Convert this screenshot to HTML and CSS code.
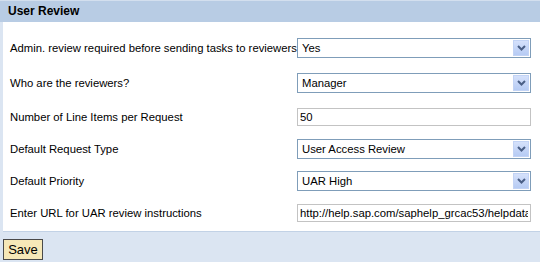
FILE: index.html
```html
<!DOCTYPE html>
<html lang="en">
<head>
  <meta charset="UTF-8" />
  <title>User Review</title>
  <link rel="stylesheet" href="styles.css">
</head>
<body>

  <div class="tray">
    <div class="tray-title">User Review</div>

    <!-- Settings -->
    <div class="tray-body">
      <div class="row first">
        <label>Admin. review required before sending tasks to reviewers</label>
        <div class="dropdown"><span>Yes</span><span class="dd-btn"><svg width="9" height="6" viewBox="0 0 9 6"><path d="M1 1 L4.5 4.5 L8 1" fill="none" stroke="#4a5f86" stroke-width="2"/></svg></span></div>
      </div>
      <div class="row second">
        <label>Who are the reviewers?</label>
        <div class="dropdown"><span>Manager</span><span class="dd-btn"><svg width="9" height="6" viewBox="0 0 9 6"><path d="M1 1 L4.5 4.5 L8 1" fill="none" stroke="#4a5f86" stroke-width="2"/></svg></span></div>
      </div>
      <div class="row">
        <label>Number of Line Items per Request</label>
        <input class="field" type="text" value="50">
      </div>
      <div class="row">
        <label>Default Request Type</label>
        <div class="dropdown"><span>User Access Review</span><span class="dd-btn"><svg width="9" height="6" viewBox="0 0 9 6"><path d="M1 1 L4.5 4.5 L8 1" fill="none" stroke="#4a5f86" stroke-width="2"/></svg></span></div>
      </div>
      <div class="row">
        <label>Default Priority</label>
        <div class="dropdown"><span>UAR High</span><span class="dd-btn"><svg width="9" height="6" viewBox="0 0 9 6"><path d="M1 1 L4.5 4.5 L8 1" fill="none" stroke="#4a5f86" stroke-width="2"/></svg></span></div>
      </div>
      <div class="row">
        <label>Enter URL for UAR review instructions</label>
        <input class="field" type="text" value="http://help.sap.com/saphelp_grcac53/helpdata/en/index.htm">
      </div>
    </div>
  </div>

  <button class="save">Save</button>

</body>
</html>
```

FILE: styles.css
```css
body {
  margin: 0;
  font-family: "Liberation Sans", Arial, sans-serif;
  font-size: 11.3px;
  color: #000;
  background: #dbe5f2;
}

.tray-title {
  height: 21px;
  line-height: 21px;
  padding-left: 8px;
  font-size: 12px;
  font-weight: bold;
  background: #b8cce4;
  border-top: 1px solid #d3dfee;
}

.tray-body {
  margin-left: 3px;
  background: #fff;
  padding: 16px 0 8px 7px;
  border-bottom: 1px solid #c2d2e6;
  display: flex;
  flex-direction: column;
  gap: 12px;
}

.row {
  display: grid;
  grid-template-columns: 287px 234px;
  align-items: center;
  height: 20px;
  white-space: nowrap;
}

.row.first {
  margin-bottom: 3px;
}

.row.second {
  margin-bottom: 2px;
}

.dropdown {
  display: flex;
  align-items: center;
  height: 18px;
  border: 1px solid #7f9db9;
  padding-left: 4px;
}

.dropdown span:first-child {
  flex: 1;
}

.dd-btn {
  display: flex;
  align-items: center;
  justify-content: center;
  width: 16px;
  height: 16px;
  margin-right: 1px;
  background: linear-gradient(#d5e1fb, #b6cbf4);
  border: 1px solid #c2d3f5;
  box-sizing: border-box;
}

.field {
  height: 18px;
  box-sizing: border-box;
  border: 1px solid #c3c3c3;
  padding: 0 2px;
  font: inherit;
  width: 234px;
  outline: none;
}

.save {
  margin: 7px 0 0 3px;
  height: 21px;
  width: 40px;
  padding: 0;
  font: inherit;
  font-size: 13px;
  background: #f6e8b8;
  border: 1px solid #4a4a4a;
}
```
